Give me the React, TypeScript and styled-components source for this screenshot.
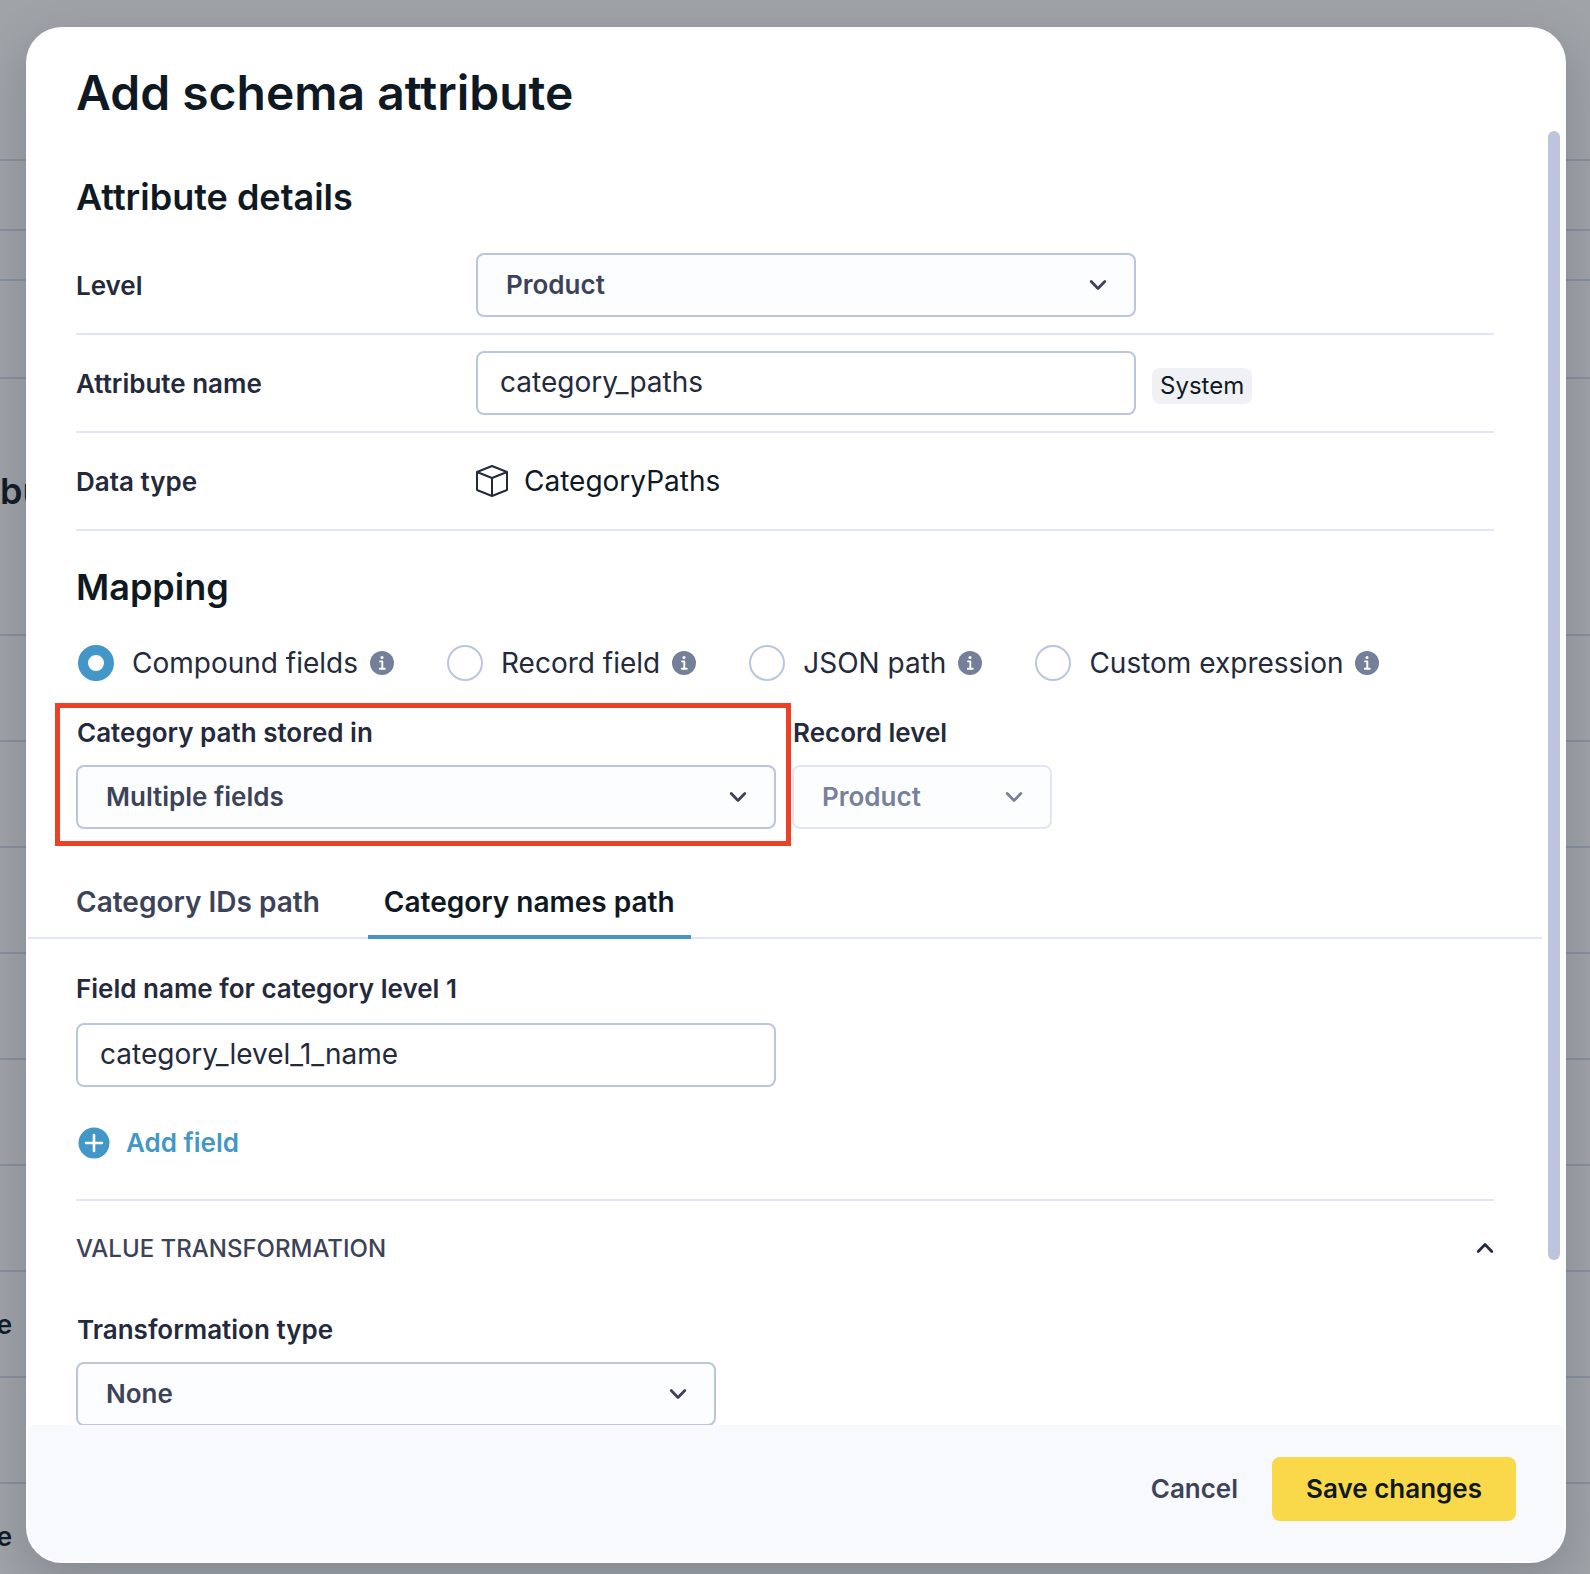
import React, { useId, useState } from "react";
import styled, { createGlobalStyle, css } from "styled-components";

const color = {
  ink: "#0f1923",
  text: "#242a3b",
  muted: "#3c4358",
  faint: "#77819b",
  border: "#bbc5dd",
  line: "#e1e5f5",
  blue: "#4397c8",
  yellow: "#f9d84a",
  annotation: "#ed4126",
};

const GlobalStyle = createGlobalStyle`
  *, *::before, *::after { box-sizing: border-box; }
  body {
    margin: 0;
    font-family: Inter, "Liberation Sans", sans-serif;
    font-variant-ligatures: none;
    color: ${color.text};
  }
  button, input, select {
    font-family: inherit;
    font-variant-ligatures: none;
    margin: 0;
  }
  h1, h2 { margin: 0; font-weight: 600; color: ${color.ink}; }
`;

const Screen = styled.div`
  display: grid;
  grid-template: minmax(0, 1fr) / minmax(0, 1fr);
  height: 100vh;
  overflow: hidden;
  background: #a0a3a8;
`;

const PageBehind = styled.div`
  grid-area: 1 / 1;
  overflow: hidden;
`;

const PageRow = styled.div<{ $height: number; $heading?: boolean }>`
  display: flex;
  align-items: center;
  height: ${(p) => p.$height}px;
  padding-bottom: ${(p) => (p.$heading ? 32 : 0)}px;
  border-bottom: 2px solid #888f9f;
  color: ${color.ink};
  font-size: ${(p) => (p.$heading ? 36 : 26)}px;
  font-weight: 600;
`;

const CutCell = styled.span`
  display: flex;
  justify-content: flex-end;
  width: 12px;
`;

const Overlay = styled.div`
  grid-area: 1 / 1;
  display: flex;
  padding: 27px 24px 11px 26px;
`;

const Modal = styled.section`
  flex: 1;
  display: flex;
  flex-direction: column;
  min-width: 0;
  border: 2px solid #fdfdff;
  border-radius: 36px;
  background: #fff;
  box-shadow: 0 16px 48px rgba(60, 75, 90, 0.3);
  overflow: hidden;
`;

const Header = styled.header`
  padding: 32px 48px 6px;
`;

const Title = styled.h1`
  font-size: 48px;
  line-height: 64px;
`;

const Body = styled.div`
  flex: 1;
  display: flex;
  min-height: 0;
`;

const Scroller = styled.div`
  flex: 1;
  min-width: 0;
  padding-top: 44px;
  overflow-y: auto;
  scrollbar-width: none;
`;

const Track = styled.div`
  width: 22px;
  padding: 0 4px 0 6px;
`;

const Thumb = styled.div`
  height: 87.25%;
  border-radius: 6px;
  background: #bcc5dc;
`;

const Section = styled.div`
  padding: 0 48px;
`;

const Heading = styled.h2<{ $spaced?: boolean }>`
  font-size: 36px;
  line-height: 44px;
  margin: ${(p) => (p.$spaced ? "34px 0 36px" : "0 0 18px")};
`;

const DetailRow = styled.div`
  display: grid;
  grid-template-columns: 400px minmax(0, 1fr);
  align-items: center;
  min-height: 98px;
  border-bottom: 2px solid ${color.line};

  & > :first-child {
    padding-top: 2px;
  }
`;

const DetailValue = styled.div`
  display: flex;
  align-items: center;
  gap: 16px;
`;

const DataType = styled.span`
  display: flex;
  align-items: center;
  gap: 16px;
  font-size: 28px;
  line-height: 36px;
  color: ${color.ink};
`;

const labelText = css`
  font-size: 26px;
  line-height: 32px;
  font-weight: 600;
  color: ${color.text};
`;

const Label = styled.label`
  ${labelText}
`;

const LabelText = styled.span`
  ${labelText}
`;

const TextInput = styled.input<{ $width: number }>`
  width: ${(p) => p.$width}px;
  max-width: 100%;
  height: 64px;
  padding: 0 22px 2px;
  border: 2px solid ${color.border};
  border-radius: 8px;
  background: #fff;
  font-size: 28px;
  color: ${color.text};
`;

const SelectBox = styled.div<{ $width: number }>`
  display: grid;
  grid-template-columns: minmax(0, 1fr);
  align-items: center;
  width: ${(p) => p.$width}px;
  max-width: 100%;
  color: ${color.muted};

  & > * {
    grid-area: 1 / 1;
  }
  & > svg {
    justify-self: end;
    margin-right: 29px;
    pointer-events: none;
  }
  &:has(select:disabled) {
    color: ${color.faint};
  }
`;

const NativeSelect = styled.select`
  appearance: none;
  width: 100%;
  height: 64px;
  padding: 0 28px 2px;
  border: 2px solid ${color.border};
  border-radius: 8px;
  background: #fcfdff;
  font-size: 26px;
  font-weight: 600;
  color: inherit;

  &:disabled {
    border-color: ${color.line};
    opacity: 1;
  }
`;

const Badge = styled.span`
  margin-top: 6px;
  padding: 0 8px;
  border-radius: 8px;
  background: #f0f1f4;
  font-size: 24px;
  line-height: 36px;
  color: ${color.ink};
`;

const RadioRow = styled.div`
  display: flex;
  flex-wrap: wrap;
  gap: 16px 51px;
`;

const RadioOption = styled.div`
  display: flex;
  align-items: center;
  gap: 12px;
  height: 36px;
`;

const RadioLabel = styled.label`
  display: flex;
  align-items: center;
  gap: 18px;
  font-size: 28px;
  line-height: 36px;
  color: ${color.text};
`;

const Radio = styled.input`
  appearance: none;
  width: 36px;
  height: 36px;
  margin: 0 0 0 2px;
  border: 2px solid ${color.border};
  border-radius: 50%;
  background: #fff;

  &:checked {
    border: 10px solid ${color.blue};
  }
`;

const FieldRow = styled.div`
  display: flex;
  align-items: flex-start;
  gap: 16px;
  margin-top: 36px;
`;

const Field = styled.div<{ $select?: boolean }>`
  position: relative;
  display: flex;
  flex-direction: column;
  gap: ${(p) => (p.$select ? 16 : 18)}px;

  & > label {
    padding-left: ${(p) => (p.$select ? 1 : 0)}px;
  }
`;

const Highlight = styled.div`
  position: absolute;
  inset: -14px -15px -17px -21px;
  border: 5px solid ${color.annotation};
  pointer-events: none;
`;

const Tabs = styled.div`
  display: flex;
  gap: 32px;
  height: 70px;
  margin-top: 40px;
  padding: 0 32px;
  box-shadow: inset 0 -2px ${color.line};
`;

const Tab = styled.button<{ $active: boolean }>`
  padding: 0 16px;
  border: 0;
  border-bottom: 4px solid ${(p) => (p.$active ? color.blue : "transparent")};
  background: none;
  font-size: 28px;
  font-weight: 600;
  color: ${(p) => (p.$active ? color.ink : color.muted)};
`;

const TabPanel = styled(Section)`
  padding-top: 34px;
`;

const AddButton = styled.button`
  display: flex;
  align-items: center;
  gap: 16px;
  margin: 40px 0;
  padding: 0 2px;
  border: 0;
  background: none;
  font-size: 26px;
  line-height: 32px;
  font-weight: 600;
  color: ${color.blue};
`;

const Accordion = styled.button`
  display: flex;
  align-items: center;
  justify-content: space-between;
  width: 100%;
  height: 98px;
  margin-bottom: 17px;
  padding: 0 0 2px;
  border: 0;
  border-top: 2px solid ${color.line};
  background: none;
  font-size: 24px;
  font-weight: 500;
  text-transform: uppercase;
  color: ${color.muted};

  svg {
    color: ${color.text};
  }
`;

const Footer = styled.footer`
  display: flex;
  justify-content: flex-end;
  gap: 16px;
  padding: 32px 48px 40px;
  background: #f7f9fd;
`;

const Button = styled.button<{ $primary?: boolean }>`
  height: 64px;
  padding: 0 ${(p) => (p.$primary ? 34 : 18)}px 2px;
  border: 0;
  border-radius: 8px;
  background: ${(p) => (p.$primary ? color.yellow : "transparent")};
  font-size: 26px;
  font-weight: 600;
  color: ${(p) => (p.$primary ? color.ink : color.muted)};
`;

const Chevron = ({ up = false }: { up?: boolean }) => (
  <svg width="18" height="12" viewBox="0 0 18 12" fill="none" aria-hidden="true">
    <path
      d={up ? "M2.2 9.4 9 2.6l6.8 6.8" : "M2.2 2.6 9 9.4l6.8-6.8"}
      stroke="currentColor"
      strokeWidth="2.8"
      strokeLinecap="round"
      strokeLinejoin="round"
    />
  </svg>
);

const InfoIcon = () => (
  <svg width="24" height="24" viewBox="0 0 24 24" role="img" aria-label="More information">
    <circle cx="12" cy="12" r="12" fill="#747f99" />
    <circle cx="12" cy="6.6" r="1.5" fill="#fff" />
    <path
      d="M10 10.4h2.3v7.2M9.8 17.8h5"
      fill="none"
      stroke="#fff"
      strokeWidth="1.9"
      strokeLinecap="round"
      strokeLinejoin="round"
    />
  </svg>
);

const CubeIcon = () => (
  <svg width="32" height="32" viewBox="0 0 32 32" fill="none" aria-hidden="true">
    <path
      d="M16 1 31 7v18l-15 6L1 25V7zM1 7l15 6 15-6M16 13v18"
      stroke={color.text}
      strokeWidth="2"
      strokeLinejoin="round"
    />
  </svg>
);

const PlusIcon = () => (
  <svg width="32" height="32" viewBox="0 0 32 32" fill="none" aria-hidden="true">
    <circle cx="16" cy="16" r="15.5" fill={color.blue} />
    <path d="M16 8v16M8 16h16" stroke="#fff" strokeWidth="2.6" strokeLinecap="round" />
  </svg>
);

type SelectProps = { id: string; width: number; options: string[]; disabled?: boolean };

const Select = ({ id, width, options, disabled }: SelectProps) => (
  <SelectBox $width={width}>
    <NativeSelect id={id} disabled={disabled}>
      {options.map((o) => (
        <option key={o}>{o}</option>
      ))}
    </NativeSelect>
    <Chevron />
  </SelectBox>
);

const pageRows: { height: number; text?: string; heading?: boolean }[] = [
  { height: 161 },
  { height: 70 },
  { height: 50 },
  { height: 98 },
  { height: 257, text: "bu", heading: true },
  { height: 106 },
  { height: 106 },
  { height: 106 },
  { height: 106 },
  { height: 106 },
  { height: 106 },
  { height: 106, text: "e" },
  { height: 106 },
  { height: 106, text: "e" },
];

const mappings = ["Compound fields", "Record field", "JSON path", "Custom expression"];
const tabs = ["Category IDs path", "Category names path"];

export default function App() {
  const id = useId();
  const [mapping, setMapping] = useState(mappings[0]);
  const [tab, setTab] = useState(tabs[1]);
  const [open, setOpen] = useState(true);

  return (
    <>
      <GlobalStyle />
      <Screen>
        <PageBehind aria-hidden="true">
          {pageRows.map((row, i) => (
            <PageRow key={i} $height={row.height} $heading={row.heading}>
              {row.heading ? row.text : <CutCell>{row.text}</CutCell>}
            </PageRow>
          ))}
        </PageBehind>
        <Overlay>
          <Modal role="dialog" aria-labelledby={`${id}-title`}>
            <Header>
              <Title id={`${id}-title`}>Add schema attribute</Title>
            </Header>
            <Body>
              <Scroller>
                <Section>
                  <Heading>Attribute details</Heading>
                  <DetailRow>
                    <Label htmlFor={`${id}-level`}>Level</Label>
                    <Select id={`${id}-level`} width={660} options={["Product", "Variant"]} />
                  </DetailRow>
                  <DetailRow>
                    <Label htmlFor={`${id}-name`}>Attribute name</Label>
                    <DetailValue>
                      <TextInput id={`${id}-name`} $width={660} defaultValue="category_paths" />
                      <Badge>System</Badge>
                    </DetailValue>
                  </DetailRow>
                  <DetailRow>
                    <LabelText>Data type</LabelText>
                    <DataType>
                      <CubeIcon />
                      CategoryPaths
                    </DataType>
                  </DetailRow>

                  <Heading $spaced>Mapping</Heading>
                  <RadioRow role="radiogroup" aria-label="Mapping">
                    {mappings.map((m) => (
                      <RadioOption key={m}>
                        <RadioLabel>
                          <Radio
                            type="radio"
                            name={`${id}-mapping`}
                            checked={mapping === m}
                            onChange={() => setMapping(m)}
                          />
                          {m}
                        </RadioLabel>
                        <InfoIcon />
                      </RadioOption>
                    ))}
                  </RadioRow>
                  <FieldRow>
                    <Field $select>
                      <Label htmlFor={`${id}-stored`}>Category path stored in</Label>
                      <Select
                        id={`${id}-stored`}
                        width={700}
                        options={["Multiple fields", "Single field"]}
                      />
                      <Highlight />
                    </Field>
                    <Field $select>
                      <Label htmlFor={`${id}-record`}>Record level</Label>
                      <Select id={`${id}-record`} width={260} options={["Product"]} disabled />
                    </Field>
                  </FieldRow>
                </Section>

                <Tabs role="tablist">
                  {tabs.map((t) => (
                    <Tab
                      key={t}
                      type="button"
                      role="tab"
                      aria-selected={tab === t}
                      $active={tab === t}
                      onClick={() => setTab(t)}
                    >
                      {t}
                    </Tab>
                  ))}
                </Tabs>

                <TabPanel role="tabpanel">
                  <Field>
                    <Label htmlFor={`${id}-field-1`}>Field name for category level 1</Label>
                    <TextInput
                      id={`${id}-field-1`}
                      $width={700}
                      defaultValue="category_level_1_name"
                    />
                  </Field>
                  <AddButton type="button">
                    <PlusIcon />
                    Add field
                  </AddButton>
                </TabPanel>

                <Section>
                  <Accordion type="button" aria-expanded={open} onClick={() => setOpen(!open)}>
                    Value transformation
                    <Chevron up={open} />
                  </Accordion>
                  {open && (
                    <Field $select>
                      <Label htmlFor={`${id}-type`}>Transformation type</Label>
                      <Select id={`${id}-type`} width={640} options={["None", "Custom"]} />
                    </Field>
                  )}
                </Section>
              </Scroller>
              <Track>
                <Thumb />
              </Track>
            </Body>
            <Footer>
              <Button type="button">Cancel</Button>
              <Button type="button" $primary>
                Save changes
              </Button>
            </Footer>
          </Modal>
        </Overlay>
      </Screen>
    </>
  );
}
